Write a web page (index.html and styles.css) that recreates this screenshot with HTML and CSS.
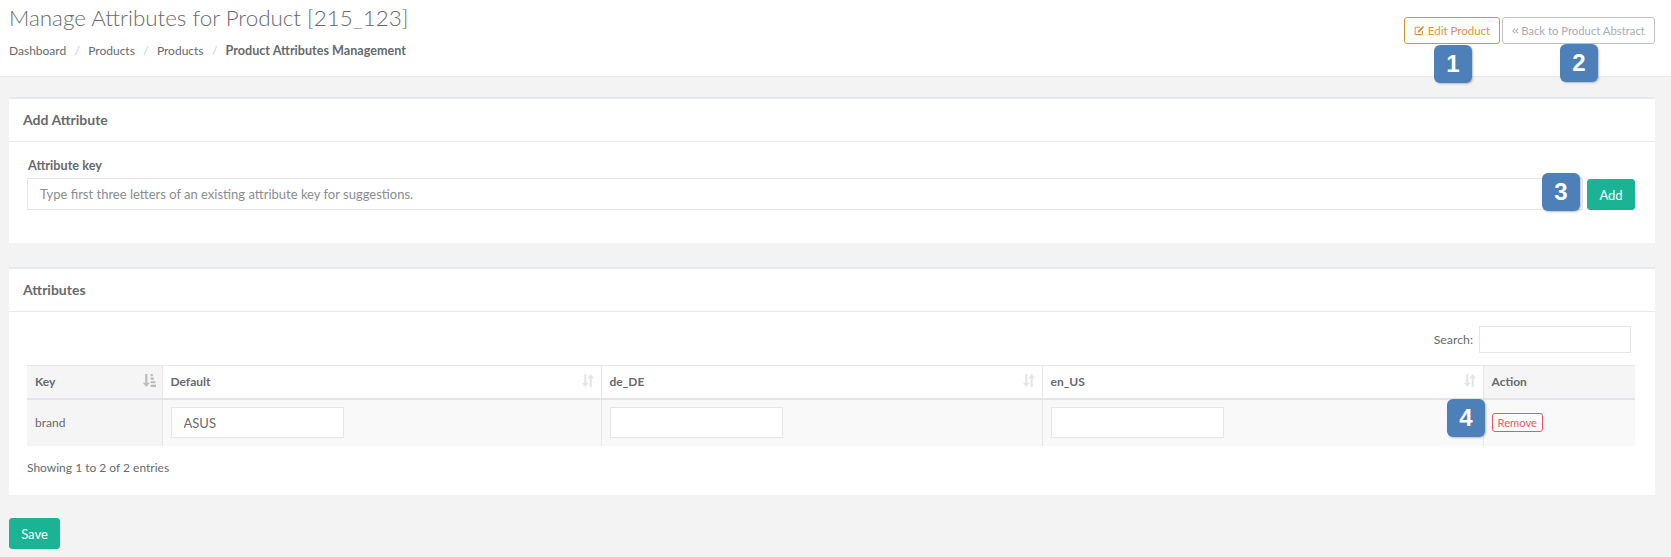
FILE: index.html
```html
<!DOCTYPE html>
<html lang="en">
<head>
<meta charset="utf-8">
<title>Manage Attributes</title>
<link rel="stylesheet" href="styles.css">
</head>
<body>
<header class="page-head">
  <div class="head-left">
    <h1>Manage Attributes for Product [215_123]</h1>
    <ol class="crumbs">
      <li>Dashboard</li><li class="sep">/</li>
      <li>Products</li><li class="sep">/</li>
      <li>Products</li><li class="sep">/</li>
      <li class="current">Product Attributes Management</li>
    </ol>
  </div>
  <div class="head-actions">
    <a class="btn-outline edit">
      <svg class="ico" viewBox="0 0 12 12" width="11" height="11"><path d="M6.5 2.5H2.2a1 1 0 0 0-1 1v6a1 1 0 0 0 1 1h6a1 1 0 0 0 1-1V6.5" fill="none" stroke="currentColor" stroke-width="1.1"/><path d="M4.2 6.3 9.6 1l1.5 1.5-5.4 5.4-2 .5z" fill="currentColor"/></svg>
      Edit Product
    </a>
    <a class="btn-outline back">
      <svg class="ico" viewBox="0 0 8 8" width="7" height="8"><path d="M3.6 1.2 1 4l2.6 2.8M7 1.2 4.4 4 7 6.8" fill="none" stroke="currentColor" stroke-width="1.2"/></svg>
      Back to Product Abstract
    </a>
    <span class="badge b1">1</span>
    <span class="badge b2">2</span>
  </div>
</header>

<main class="content">
  <section class="box box-add">
    <h2 class="box-title">Add Attribute</h2>
    <div class="box-body add-body">
      <label class="field-label">Attribute key</label>
      <div class="add-row">
        <input class="text-input grow" type="text" placeholder="Type first three letters of an existing attribute key for suggestions.">
        <button class="btn-primary add">Add</button>
        <span class="badge b3">3</span>
      </div>
    </div>
  </section>

  <section class="box box-attrs">
    <h2 class="box-title">Attributes</h2>
    <div class="box-body attrs-body">
      <div class="search-row">
        <label class="search-label">Search:</label>
        <input class="search-input" type="text">
      </div>
      <div class="table-wrap">
        <table class="grid">
          <colgroup>
            <col class="c-key"><col class="c-default"><col class="c-lang"><col class="c-lang"><col>
          </colgroup>
          <thead>
            <tr>
              <th class="shaded">Key
                <svg class="sort active" viewBox="0 0 13 12" width="14" height="13"><path d="M3 0h2v8h2.2L4 12 .8 8H3z" fill="currentColor"/><path d="M8 0h2v2H8zM8 3.3h3v2H8zM8 6.6h4.4v2H8zM8 9.9H13V12H8z" fill="currentColor"/></svg>
              </th>
              <th>Default
                <svg class="sort" viewBox="0 0 13 12" width="14" height="13"><path d="M3 0h2v8h2.2L4 12 .8 8H3zM8 12h2V4h2.2L9 0 5.8 4H8z" fill="currentColor"/></svg>
              </th>
              <th>de_DE
                <svg class="sort" viewBox="0 0 13 12" width="14" height="13"><path d="M3 0h2v8h2.2L4 12 .8 8H3zM8 12h2V4h2.2L9 0 5.8 4H8z" fill="currentColor"/></svg>
              </th>
              <th>en_US
                <svg class="sort" viewBox="0 0 13 12" width="14" height="13"><path d="M3 0h2v8h2.2L4 12 .8 8H3zM8 12h2V4h2.2L9 0 5.8 4H8z" fill="currentColor"/></svg>
              </th>
              <th class="shaded">Action</th>
            </tr>
          </thead>
          <tbody>
            <tr>
              <td class="shaded-row">brand</td>
              <td><input class="cell-input" type="text" value="ASUS"></td>
              <td><input class="cell-input" type="text"></td>
              <td><input class="cell-input" type="text"></td>
              <td><a class="btn-remove">Remove</a></td>
            </tr>
          </tbody>
        </table>
        <span class="badge b4">4</span>
      </div>
      <p class="info">Showing 1 to 2 of 2 entries</p>
    </div>
  </section>

  <button class="btn-primary save">Save</button>
</main>
</body>
</html>
```

FILE: styles.css
```css
* { box-sizing: border-box; }
html, body { margin: 0; padding: 0; }
body {
  background: #f3f3f4;
  color: #676a6c;
  font-family: Lato, "Open Sans", sans-serif;
  font-size: 13px;
  height: 557px;
  overflow: hidden;
}
.page-head {
  height: 77px;
  background: #fff;
  border-bottom: 1px solid #e7eaec;
  display: flex;
  justify-content: space-between;
  padding: 0 16px 0 9px;
}
.head-left h1 {
  margin: 3px 0 0;
  font-size: 22.4px;
  line-height: 29px;
  font-weight: 300;
  color: #676a6c;
}
.crumbs {
  list-style: none;
  display: flex;
  margin: 10px 0 0;
  padding: 0;
  font-size: 12px;
  line-height: 17px;
}
.crumbs .sep { color: #ccc; margin: 0 8.3px; }
.crumbs .current { font-weight: 700; font-size: 12.6px; }
.head-actions {
  position: relative;
  display: flex;
  gap: 2px;
  padding-top: 17px;
  align-items: flex-start;
}
.btn-outline {
  display: flex;
  align-items: center;
  justify-content: center;
  gap: 3px;
  height: 27px;
  border: 1px solid;
  border-radius: 3px;
  font-size: 11.5px;
  background: #fff;
}
.ico { flex: none; }
.edit { width: 96px; color: #e0923a; border-color: #d9962f; }
.back { width: 153px; color: #a9acb0; border-color: #c2c2c2; font-size: 11.3px; gap: 2px; }
.badge {
  position: absolute;
  width: 38px;
  height: 38px;
  border-radius: 6px;
  background: #4d80b9;
  color: #fff;
  font-family: "Liberation Sans", Arial, sans-serif;
  font-weight: 700;
  font-size: 24px;
  line-height: 38px;
  text-align: center;
  box-shadow: 1px 1px 2px rgba(90, 110, 140, .45);
}
.b1 { left: 30px; top: 45px; }
.b2 { left: 156px; top: 44px; }
.b3 { right: 55px; top: -5px; }
.b4 { left: 1420px; top: 34px; }
.content { padding: 20px 16px 0 9px; }
.box {
  background: #fff;
  border-top: 2px solid #e7eaec;
}
.box-title {
  margin: 0;
  height: 43px;
  padding: 0 14px;
  border-bottom: 1px solid #e7eaec;
  font-size: 14px;
  font-weight: 700;
  line-height: 41px;
  color: #676a6c;
}
.box-add { height: 146px; margin-bottom: 24px; }
.add-body { padding: 16px 20px 0 18px; }
.field-label {
  display: block;
  font-size: 12.7px;
  font-weight: 700;
  line-height: 15px;
  margin: 0 0 5px 1px;
}
.add-row {
  position: relative;
  display: flex;
  align-items: flex-start;
  gap: 4px;
}
.text-input {
  height: 32px;
  border: 1px solid #e5e6e7;
  padding: 0 12px;
  font: 13px Lato, sans-serif;
  color: #676a6c;
  background: #fff;
  outline: 0;
}
.text-input::placeholder { color: #8b8d90; opacity: 1; }
.grow { flex: 1; min-width: 0; }
.btn-primary {
  border: 1px solid #1ab394;
  background: #1ab394;
  color: #fff;
  border-radius: 3px;
  font: 13px Lato, sans-serif;
  padding: 0;
}
.add { width: 48px; height: 31px; margin-top: 1px; }
.box-attrs { height: 228px; margin-bottom: 23px; }
.attrs-body { padding: 14px 20px 0 18px; }
.search-row {
  display: flex;
  justify-content: flex-end;
  align-items: center;
  gap: 6px;
  padding-right: 4px;
  margin-bottom: 12px;
}
.search-label { font-size: 12.3px; }
.search-input {
  width: 152px;
  height: 27px;
  border: 1px solid #e5e6e7;
  background: #fff;
  outline: 0;
}
.table-wrap { position: relative; }
.grid {
  width: 100%;
  border-collapse: collapse;
  table-layout: fixed;
  font-size: 12px;
}
.c-key { width: 135px; }
.c-default { width: 439px; }
.c-lang { width: 441px; }
.grid th {
  position: relative;
  height: 33px;
  padding: 0 8px;
  text-align: left;
  font-weight: 700;
  background: #fff;
  border: 1px solid #e7e7e7;
  border-bottom: 2px solid #e2e4e7;
}
.grid th:first-child, .grid td:first-child { border-left: 0; }
.grid th:last-child, .grid td:last-child { border-right: 0; }
.grid .shaded { background: #f5f5f6; }
.sort {
  position: absolute;
  right: 6px;
  top: 8px;
  color: #e4e5e6;
}
.sort.active { color: #b8babc; }
.grid td {
  height: 47px;
  padding: 0 8px;
  background: #f9f9f9;
  border-right: 1px solid #e7e7e7;
  border-left: 1px solid #e7e7e7;
}
.grid .shaded-row { background: #f5f5f5; }
.cell-input {
  display: block;
  width: 173px;
  height: 31px;
  border: 1px solid #e5e6e7;
  padding: 0 12px;
  background: #fff;
  font: 13px Lato, sans-serif;
  color: #676a6c;
  outline: 0;
}
.btn-remove {
  display: inline-block;
  height: 19px;
  line-height: 17px;
  padding: 0 5px;
  font-size: 11.2px;
  color: #ed5565;
  background: #fff;
  border: 1px solid #ed5565;
  border-radius: 3px;
}
.info { margin: 14px 0 0; font-size: 12px; line-height: 15px; }
.save { display: block; width: 51px; height: 31px; }
```
